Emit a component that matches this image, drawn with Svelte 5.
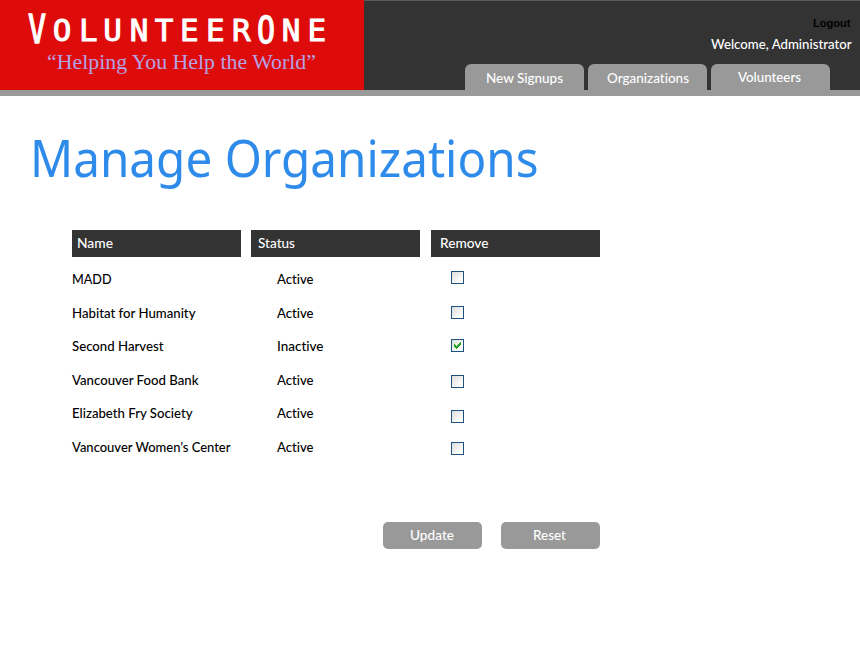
<script>
  const tabs = [
    { label: 'New Signups', width: 77, left: 21, top: 7 },
    { label: 'Organizations', width: 82, left: 18.5, top: 7 },
    { label: 'Volunteers', width: 63, left: 27, top: 6 }
  ];
  const columns = [
    { label: 'Name', width: 36, left: 4.5 },
    { label: 'Status', width: 37, left: 6.5 },
    { label: 'Remove', width: 48.5, left: 8.5 }
  ];
  let rows = $state([
    { name: 'MADD', width: 39.5, active: true, remove: false, height: 34, boxTop: 1 },
    { name: 'Habitat for Humanity', width: 123.5, active: true, remove: false, height: 33, boxTop: 2 },
    { name: 'Second Harvest', width: 91.5, active: false, remove: true, height: 34, boxTop: 2 },
    { name: 'Vancouver Food Bank', width: 126.5, active: true, remove: false, height: 33, boxTop: 4 },
    { name: 'Elizabeth Fry Society', width: 120.5, active: true, remove: false, height: 34, boxTop: 6 },
    { name: 'Vancouver Women’s Center', width: 158.5, active: true, remove: false, height: 34, boxTop: 4 }
  ]);
</script>

{#snippet label(text, width)}
  <svg class="label" {width} height="15"><text x="0" y="12" textLength={width} lengthAdjust="spacingAndGlyphs">{text}</text></svg>
{/snippet}

<div class="page">
  <header>
    <div class="brand">
      <svg class="logo" width="364" height="90">
        <g class="wordmark">
          <text transform="translate(28 42.5) scale(1 1.29)">V</text>
          <text transform="scale(1.03 1)" x="51.2 76.7 100.2 125.9 150.2 174.8 200 225.2" y="41.5">OLUNTEER</text>
          <text transform="translate(257 42.5) scale(1 1.25)">O</text>
          <text transform="scale(1.03 1)" x="273.5 298.5" y="41.5">NE</text>
        </g>
        <text class="tagline" x="47" y="69" textLength="269" lengthAdjust="spacingAndGlyphs">“Helping You Help the World”</text>
      </svg>
    </div>
    <div class="bar">
      <div class="account">
        <a class="logout" href="#logout"><svg class="label" width="38" height="15"><text x="0" y="12" textLength="37.5" lengthAdjust="spacingAndGlyphs">Logout</text></svg></a>
        <div class="welcome">{@render label('Welcome, Administrator', 140.5)}</div>
      </div>
      <nav>
        {#each tabs as tab}
          <a class="tab" href="#tab" style="padding: {tab.top}px 0 0 {tab.left}px">{@render label(tab.label, tab.width)}</a>
        {/each}
      </nav>
    </div>
  </header>

  <main>
    <h1><svg class="title" width="520" height="70"><text x="0" y="46.5" textLength="508.5" lengthAdjust="spacingAndGlyphs">Manage Organizations</text></svg></h1>
    <div class="head">
      {#each columns as col}
        <div class="heading" style="padding-left: {col.left}px">{@render label(col.label, col.width)}</div>
      {/each}
    </div>
    <div class="rows">
      {#each rows as row}
        <div class="row" style="height: {row.height}px">
          <div class="name">{@render label(row.name, row.width)}</div>
          <div class="status">{@render label(row.active ? 'Active' : 'Inactive', row.active ? 36.5 : 46.5)}</div>
          <div class="remove" style="padding-top: {row.boxTop}px">
            <button class="check" aria-label="Remove {row.name}" onclick={() => (row.remove = !row.remove)}>
              {#if row.remove}
                <svg width="11" height="11" shape-rendering="crispEdges"><path d="M2 4h1v1h1v1h1v-1h1v-1h1v-1h1v-1h1v3h-1v1h-1v1h-1v1h-1v1h-1v-1h-1v-1h-1z" /></svg>
              {/if}
            </button>
          </div>
        </div>
      {/each}
    </div>
    <div class="actions">
      <button class="action update">{@render label('Update', 44)}</button>
      <button class="action reset">{@render label('Reset', 33)}</button>
    </div>
  </main>
</div>

<style>
  :global(body) { margin: 0; background: #fff; }
  .page { width: 860px; height: 669px; overflow: hidden; font-family: Lato, sans-serif; font-size: 13.2px; font-weight: 500; font-variant-ligatures: none; color: #000; }
  svg { display: block; overflow: visible; }
  svg text { fill: currentColor; }
  a { color: inherit; text-decoration: none; }
  header { display: flex; height: 90px; border-bottom: 6px solid #999; }
  .brand { width: 364px; background: #de0b0b; color: #fff; }
  .wordmark { font: 30px "DejaVu Sans Mono", monospace; }
  .wordmark text { stroke: #fff; stroke-width: 1px; }
  .logo .tagline { font: 21px "Liberation Serif", serif; fill: #b4a3e4; }
  .bar { flex: 1; display: flex; flex-direction: column; justify-content: space-between; box-sizing: border-box; background: #333; border-top: 1px solid #5c5c5c; color: #fff; }
  .account { display: flex; flex-direction: column; align-items: flex-end; padding: 14px 9px 0 0; }
  .logout { color: #000; font: bold 11px "Liberation Sans", sans-serif; }
  .welcome { margin-top: 7px; }
  nav { display: flex; gap: 4px; padding-left: 101px; }
  .tab { box-sizing: border-box; width: 119px; height: 26px; background: #999; border-radius: 6px 6px 0 0; }
  main { padding: 34px 0 0 72px; }
  h1 { margin: 0 0 0 -42px; height: 100px; font-family: "Noto Sans", sans-serif; font-size: 51.5px; font-weight: 400; color: #2e8bea; }
  .head { display: grid; grid-template-columns: 179px 180px 169px; color: #fff; }
  .heading { box-sizing: border-box; width: 169px; height: 27px; padding-top: 6px; background: #333; }
  .rows { padding-top: 13px; }
  .row { display: grid; grid-template-columns: 204.5px 174.5px 149px; align-items: start; }
  .name, .status { padding-top: 2px; }
  .check { display: block; box-sizing: border-box; width: 13px; height: 13px; padding: 0; border: 1px solid #1c5180; background: linear-gradient(135deg, #dcdcd7, #fff 80%); border-radius: 0; }
  .check path { fill: #21a121; }
  .actions { display: flex; gap: 19px; padding: 50px 0 0 311px; }
  .action { box-sizing: border-box; width: 99px; height: 27px; padding: 6px 0 0; border: 0; border-radius: 5px; background: #999; color: #fff; font: inherit; display: flex; align-items: flex-start; }
  .update { padding-left: 26.5px; }
  .reset { padding-left: 31.5px; }
</style>
